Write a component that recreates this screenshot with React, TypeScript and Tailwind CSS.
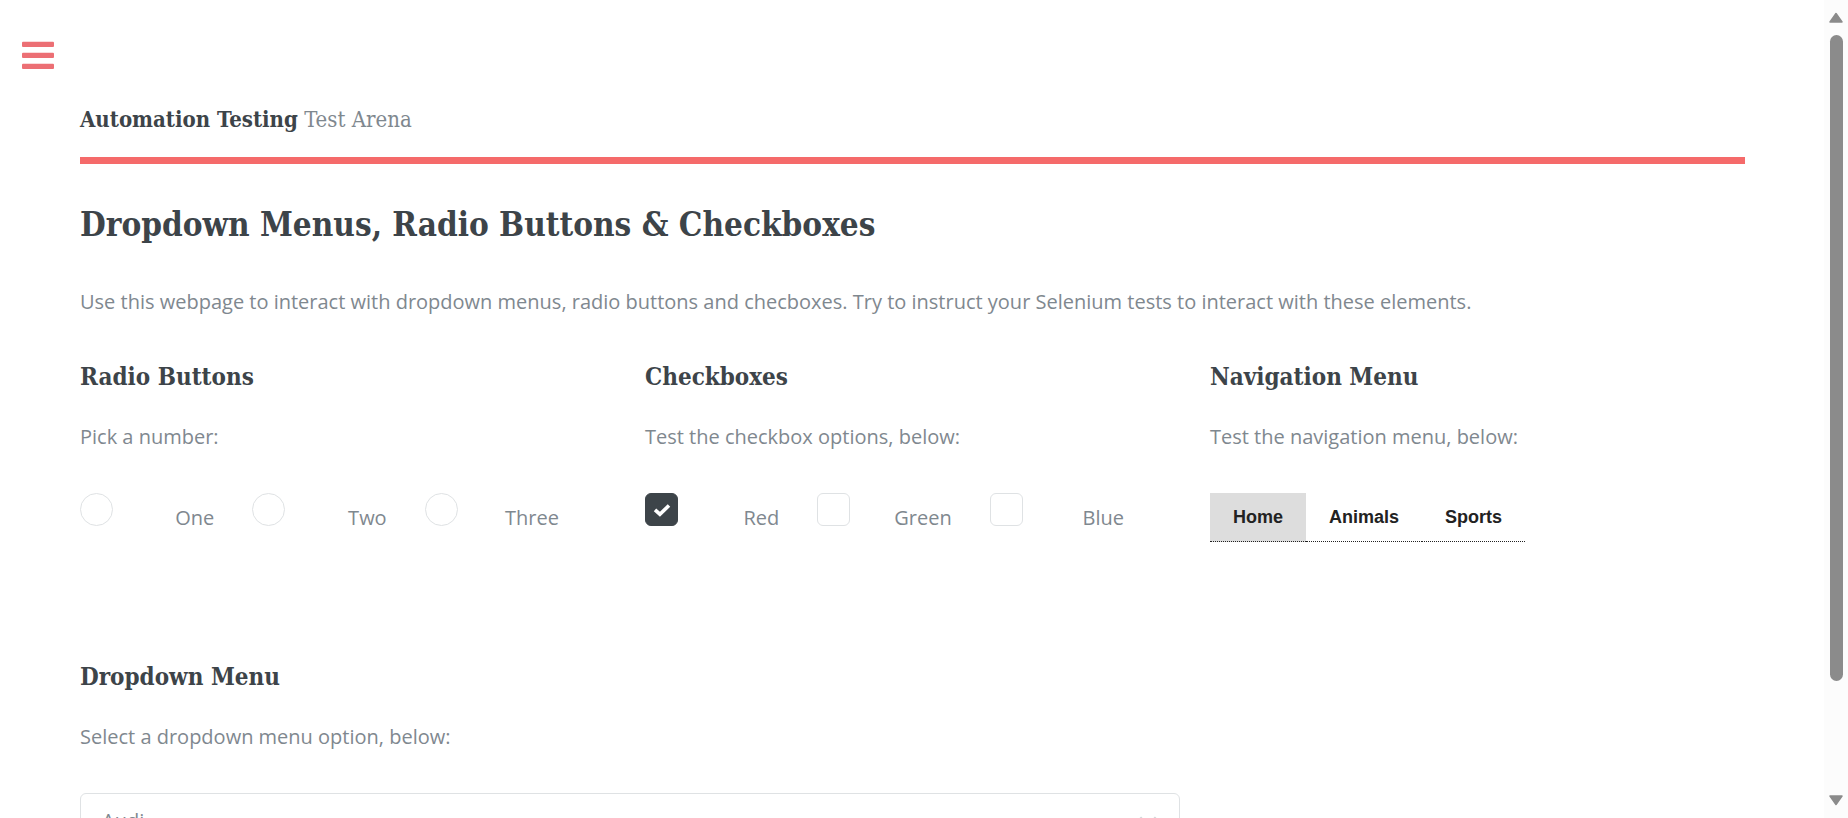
import { useState } from "react";
import type { ReactNode } from "react";

const slab = "font-['Roboto_Slab','DejaVu_Serif_Condensed','DejaVu_Serif',serif]";

function Section({ title, intro, children }: { title: string; intro: string; children: ReactNode }) {
  return (
    <section>
      <h3 className={`${slab} text-2xl leading-[38px] font-bold text-[#3d4449]`}>{title}</h3>
      <p className="mt-6 mb-[39px] text-xl leading-[34px]">{intro}</p>
      {children}
    </section>
  );
}

function Options({ type, names, initial }: { type: "radio" | "checkbox"; names: string[]; initial: string[] }) {
  const [picked, setPicked] = useState<string[]>(initial);
  const toggle = (name: string) => {
    if (type === "radio") setPicked([name]);
    else setPicked(picked.includes(name) ? picked.filter((n) => n !== name) : [...picked, name]);
  };
  const shape = type === "radio" ? "rounded-full" : "rounded-md";
  return (
    <div className="grid grid-cols-3 pr-[18px]">
      {names.map((name) => {
        const on = picked.includes(name);
        return (
          <div key={name} className="flex items-start justify-between pr-[38px]">
            <span className="grid">
              <input
                id={`${type}-${name}`}
                name={type}
                type={type}
                checked={on}
                onChange={() => toggle(name)}
                className={`col-start-1 row-start-1 size-[33px] appearance-none border border-[#dfe2e4] bg-white checked:border-[#3d4449] checked:bg-[#3d4449] ${shape}`}
              />
              {on && (
                <svg viewBox="0 0 18 14" className="pointer-events-none col-start-1 row-start-1 h-[14px] w-[18px] place-self-center" aria-hidden="true">
                  <path d="M2 6.8 L6.9 11.2 L16 2.5" fill="none" stroke="#fff" strokeWidth="3.6" />
                </svg>
              )}
            </span>
            <label htmlFor={`${type}-${name}`} className="pt-2 text-xl leading-[34px]">
              {name}
            </label>
          </div>
        );
      })}
    </div>
  );
}

function ScrollBar() {
  return (
    <div className="flex w-6 shrink-0 flex-col items-center bg-[#fcfcfc] py-3" aria-hidden="true">
      <svg viewBox="0 0 14 11" className="h-[11px] w-[14px]">
        <path d="M7 1.5 L13 10 H1 Z" fill="#8b8b8b" stroke="#8b8b8b" strokeWidth="1.5" strokeLinejoin="round" />
      </svg>
      <div className="my-3 flex w-[13px] grow flex-col">
        <div className="grow-[19] rounded-full bg-[#8b8b8b]" />
        <div className="grow-[3]" />
      </div>
      <svg viewBox="0 0 14 11" className="h-[11px] w-[14px]">
        <path d="M7 9.5 L13 1 H1 Z" fill="#8b8b8b" stroke="#8b8b8b" strokeWidth="1.5" strokeLinejoin="round" />
      </svg>
    </div>
  );
}

export default function App() {
  return (
    <div className="flex h-screen bg-white font-['Open_Sans',sans-serif] text-[#7f888f]">
      <div className="min-w-0 grow overflow-y-auto [scrollbar-width:none]">
        <button type="button" aria-label="Toggle menu" className="mt-[41px] ml-[22px] block">
          <svg viewBox="0 0 32 28" className="h-7 w-8" fill="#ec6f74" aria-hidden="true">
            <rect y="0.8" width="32" height="5.2" rx="1" />
            <rect y="11.8" width="32" height="5.2" rx="1" />
            <rect y="22.8" width="32" height="5.2" rx="1" />
          </svg>
        </button>
        <main className="pr-[79px] pl-20">
          <header className="mt-[33px] border-b-[7px] border-[#f56a6a] pb-5">
            <a href="#home" className={`${slab} block text-[22px] leading-[34px]`}>
              <strong className="font-bold text-[#3d4449]">Automation Testing</strong> Test Arena
            </a>
          </header>
          <h1 className={`${slab} mt-[33px] text-[33px] leading-[56px] font-bold text-[#3d4449]`}>
            Dropdown Menus, Radio Buttons &amp; Checkboxes
          </h1>
          <p className="mt-8 text-xl leading-[34px]">
            Use this webpage to interact with dropdown menus, radio buttons and checboxes. Try to instruct your
            Selenium tests to interact with these elements.
          </p>
          <div className="mt-[39px] grid grid-cols-3 gap-[30px]">
            <Section title="Radio Buttons" intro="Pick a number:">
              <Options type="radio" names={["One", "Two", "Three"]} initial={[]} />
            </Section>
            <Section title="Checkboxes" intro="Test the checkbox options, below:">
              <Options type="checkbox" names={["Red", "Green", "Blue"]} initial={["Red"]} />
            </Section>
            <Section title="Navigation Menu" intro="Test the navigation menu, below:">
              <nav className="flex font-['Liberation_Sans',Arial,sans-serif] text-lg leading-[48px] font-bold text-[#222]">
                <a href="#home" className="border-b border-dotted border-[#222] bg-[#ddd] px-[23px]">Home</a>
                <a href="#animals" className="border-b border-dotted border-[#222] px-[23px]">Animals</a>
                <a href="#sports" className="border-b border-dotted border-[#222] px-[23px]">Sports</a>
              </nav>
            </Section>
          </div>
          <div className="mt-[116px] grid grid-cols-3 gap-[30px] pb-32">
            <div className="col-span-2">
              <Section title="Dropdown Menu" intro="Select a dropdown menu option, below:">
                <div className="grid items-center">
                  <select
                    aria-label="Car"
                    className="col-start-1 row-start-1 h-[55px] appearance-none rounded-md border border-[#dfe2e4] bg-white px-[21px] text-xl"
                  >
                    <option>Audi</option>
                    <option>BMW</option>
                    <option>Mercedes</option>
                  </select>
                  <svg viewBox="0 0 20 14" className="pointer-events-none col-start-1 row-start-1 mr-[22px] h-[14px] w-5 justify-self-end" aria-hidden="true">
                    <path d="M2 3.5 L10 11.5 L18 3.5" fill="none" stroke="#d2d7d9" strokeWidth="3" />
                  </svg>
                </div>
              </Section>
            </div>
          </div>
        </main>
      </div>
      <ScrollBar />
    </div>
  );
}
